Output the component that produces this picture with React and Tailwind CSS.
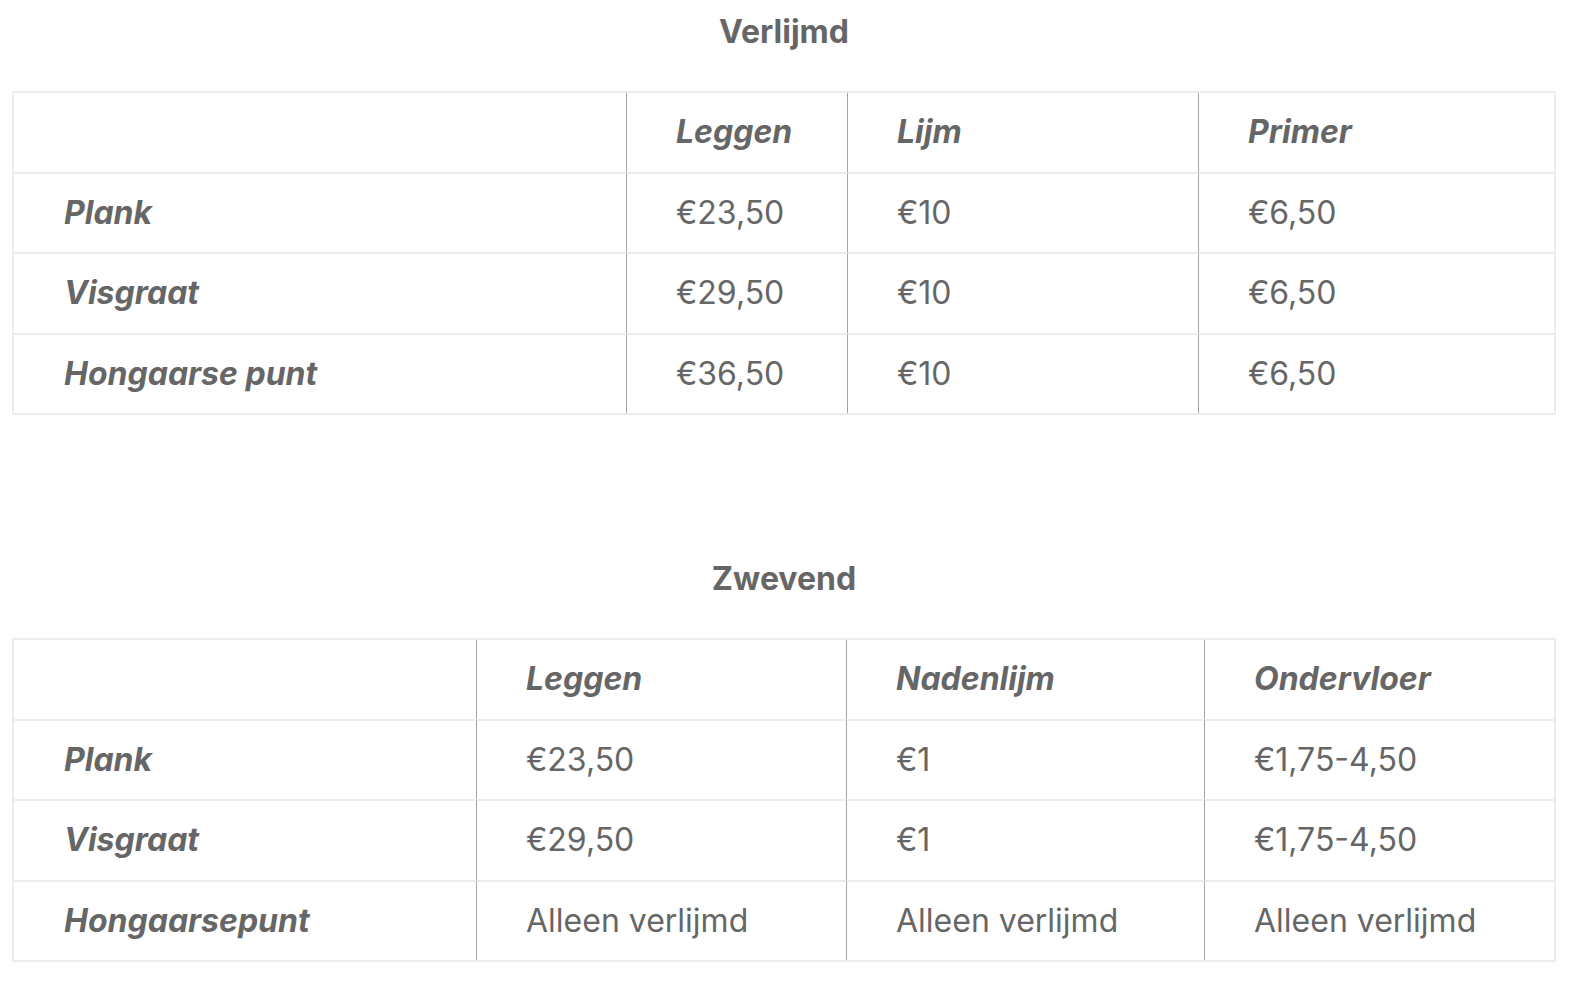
import React from 'react';

const tables = [
  {
    title: 'Verlijmd',
    widths: ['w-[612px]', 'w-[221px]', 'w-[351px]', 'w-[356px]'],
    head: ['Leggen', 'Lijm', 'Primer'],
    rows: [
      ['Plank', '€23,50', '€10', '€6,50'],
      ['Visgraat', '€29,50', '€10', '€6,50'],
      ['Hongaarse punt', '€36,50', '€10', '€6,50'],
    ],
  },
  {
    title: 'Zwevend',
    widths: ['w-[462px]', 'w-[370px]', 'w-[358px]', 'w-[350px]'],
    head: ['Leggen', 'Nadenlijm', 'Ondervloer'],
    rows: [
      ['Plank', '€23,50', '€1', '€1,75-4,50'],
      ['Visgraat', '€29,50', '€1', '€1,75-4,50'],
      ['Hongaarsepunt', 'Alleen verlijmd', 'Alleen verlijmd', 'Alleen verlijmd'],
    ],
  },
];

function PriceTable({ title, widths, head, rows }) {
  return (
    <section>
      <h2 className="text-center text-[32px] leading-[32px] font-bold">{title}</h2>
      <table className="mt-[43px] w-[1544px] table-fixed border-separate border-spacing-0 border-2 border-[#ececec]">
        <colgroup>
          {widths.map((w, i) => <col key={i} className={w} />)}
        </colgroup>
        <tbody>
          <tr>
            <td className="h-[78.5px]" />
            {head.map(h => (
              <td key={h} className="h-[78.5px] pl-[49px] border-l border-[#a3a3a3] font-bold italic">
                {h}
              </td>
            ))}
          </tr>
          {rows.map(row => (
            <tr key={row[0]}>
              {row.map((cell, i) => (
                <td
                  key={i}
                  className={
                    i === 0
                      ? 'h-[80.5px] pl-[50px] border-t-2 border-t-[#ececec] font-bold italic'
                      : 'h-[80.5px] pl-[49px] border-t-2 border-t-[#ececec] border-l border-l-[#a3a3a3]'
                  }
                >
                  {cell}
                </td>
              ))}
            </tr>
          ))}
        </tbody>
      </table>
    </section>
  );
}

export default function App() {
  return (
    <div className="min-h-screen bg-white pl-[12px] pt-[16px] text-[32px] leading-[40px] text-[#666666] font-['Inter',sans-serif]">
      <div className="w-[1544px] flex flex-col gap-[148px]">
        {tables.map(t => <PriceTable key={t.title} {...t} />)}
      </div>
    </div>
  );
}
